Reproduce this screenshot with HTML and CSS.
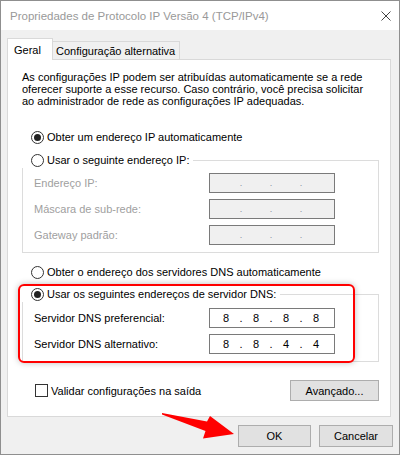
FILE: index.html
```html
<!DOCTYPE html>
<html lang="pt-BR">
<head>
    <meta charset="UTF-8">
    <title>Propriedades de Protocolo IP Versão 4 (TCP/IPv4)</title>
    <link rel="stylesheet" href="styles.css">
</head>
<body>
    <div class="window">
        <div class="titlebar">
            <span class="title">Propriedades de Protocolo IP Versão 4 (TCP/IPv4)</span>
            <svg class="close" viewBox="0 0 10 10" width="10" height="10">
                <path d="M0.5 0.5 L9.5 9.5 M9.5 0.5 L0.5 9.5" stroke="#444" stroke-width="1" fill="none"/>
            </svg>
        </div>

        <div class="tabs">
            <div class="tab active">Geral</div>
            <div class="tab">Configuração alternativa</div>
        </div>

        <div class="panel">
            <p class="intro">As configurações IP podem ser atribuídas automaticamente se a rede<br>oferecer suporte a esse recurso. Caso contrário, você precisa solicitar<br>ao administrador de rede as configurações IP adequadas.</p>

            <div class="option first"><span class="radio checked"></span>Obter um endereço IP automaticamente</div>

            <fieldset class="group disabled">
                <legend class="option"><span class="radio"></span>Usar o seguinte endereço IP:</legend>
                <div class="rows">
                    <div class="row">
                        <span class="label">Endereço IP:</span>
                        <span class="ip"><span class="seg"></span><span class="dot">.</span><span class="seg"></span><span class="dot">.</span><span class="seg"></span><span class="dot">.</span><span class="seg"></span></span>
                    </div>
                    <div class="row">
                        <span class="label">Máscara de sub-rede:</span>
                        <span class="ip"><span class="seg"></span><span class="dot">.</span><span class="seg"></span><span class="dot">.</span><span class="seg"></span><span class="dot">.</span><span class="seg"></span></span>
                    </div>
                    <div class="row">
                        <span class="label">Gateway padrão:</span>
                        <span class="ip"><span class="seg"></span><span class="dot">.</span><span class="seg"></span><span class="dot">.</span><span class="seg"></span><span class="dot">.</span><span class="seg"></span></span>
                    </div>
                </div>
            </fieldset>

            <div class="option dns-auto"><span class="radio"></span>Obter o endereço dos servidores DNS automaticamente</div>

            <fieldset class="group dns">
                <legend class="option"><span class="radio checked"></span>Usar os seguintes endereços de servidor DNS:</legend>
                <div class="rows">
                    <div class="row">
                        <span class="label">Servidor DNS preferencial:</span>
                        <span class="ip"><span class="seg">8</span><span class="dot">.</span><span class="seg">8</span><span class="dot">.</span><span class="seg">8</span><span class="dot">.</span><span class="seg">8</span></span>
                    </div>
                    <div class="row">
                        <span class="label">Servidor DNS alternativo:</span>
                        <span class="ip"><span class="seg">8</span><span class="dot">.</span><span class="seg">8</span><span class="dot">.</span><span class="seg">4</span><span class="dot">.</span><span class="seg">4</span></span>
                    </div>
                </div>
            </fieldset>

            <div class="check-row">
                <span class="check"><span class="box"></span>Validar configurações na saída</span>
                <span class="button advanced">Avançado...</span>
            </div>

            <!-- destaque vermelho sobre o grupo DNS -->
            <div class="highlight"></div>
        </div>

        <div class="footer">
            <span class="button ok">OK</span>
            <span class="button cancel">Cancelar</span>
        </div>

        <!-- seta vermelha apontando para OK -->
        <svg class="arrow" viewBox="150 400 100 45" width="100" height="45">
            <path d="M162 413 L207 421.5 L210 416 L234 434 L203 438.5 L205.5 431 L162 414.5 Z" fill="#f00"/>
        </svg>
    </div>
</body>
</html>
```

FILE: styles.css
```css
body {
    margin: 0;
    font-family: "Liberation Sans", Arial, sans-serif;
    font-size: 11px;
    color: #000;
}
.window {
    position: relative;
    width: 400px;
    height: 455px;
    box-sizing: border-box;
    border: 1px solid #8f8f8f;
    background: #f0f0f0;
}
.titlebar {
    height: 29px;
    background: #fff;
    display: flex;
    align-items: center;
    padding-left: 9px;
}
.title {
    flex: 1;
    color: #999;
    font-size: 11.5px;
}
.close {
    margin-right: 8px;
}
.tabs {
    display: flex;
    align-items: flex-end;
    margin: 8px 0 0 6px;
    height: 21px;
    position: relative;
    z-index: 1;
}
.tab {
    box-sizing: border-box;
    border: 1px solid #d9d9d9;
    border-bottom: none;
    border-left: none;
    width: 127px;
    height: 18px;
    padding-left: 3px;
    display: flex;
    align-items: center;
}
.tab.active {
    background: #fff;
    border-left: 1px solid #d9d9d9;
    width: 46px;
    height: 22px;
    margin-bottom: -1px;
    padding-left: 6px;
}
.panel {
    position: relative;
    margin: 0 8px 0 6px;
    height: 358px;
    box-sizing: border-box;
    border: 1px solid #d9d9d9;
    background: #fff;
    padding: 0 11px 0 14px;
}
.intro {
    margin: 12px 0 0;
    line-height: 11.8px;
}
.option {
    display: flex;
    align-items: center;
    height: 16px;
}
.option.first {
    margin-top: 22px;
}
.radio {
    width: 13px;
    height: 13px;
    box-sizing: border-box;
    border: 1px solid #333;
    border-radius: 50%;
    margin: 0 3px 0 9px;
    display: flex;
    align-items: center;
    justify-content: center;
}
.radio.checked::after {
    content: "";
    width: 7px;
    height: 7px;
    border-radius: 50%;
    background: #222;
}
.group {
    margin: 7px 0 0;
    padding: 5px 0 7px;
    border: 1px solid #dcdcdc;
    min-inline-size: 0;
}
.group legend {
    margin-left: -1px;
    padding: 0 4px 0 0;
}
.group.dns {
    margin-top: 6px;
    padding-top: 6px;
}
.rows {
    display: grid;
    gap: 6px;
}
.row {
    display: flex;
    align-items: center;
    height: 20px;
    padding-left: 11px;
}
.label {
    width: 175px;
}
.ip {
    width: 126px;
    height: 20px;
    box-sizing: border-box;
    border: 1px solid #7a7a7a;
    background: #fff;
    display: flex;
    align-items: center;
    padding-left: 4px;
}
.seg {
    width: 24px;
    text-align: center;
}
.dot {
    width: 6px;
    text-align: center;
}
.disabled .label {
    color: #a0a0a0;
}
.disabled .ip {
    background: #f0f0f0;
}
.disabled .dot {
    color: #8a8aa0;
    font-size: 9px;
}
.dns-auto {
    margin-top: 11px;
}
.check-row {
    display: flex;
    align-items: center;
    justify-content: space-between;
    margin-top: 18px;
    height: 21px;
}
.check {
    display: flex;
    align-items: center;
}
.box {
    width: 13px;
    height: 13px;
    box-sizing: border-box;
    border: 1px solid #333;
    margin: 0 3px 0 13px;
}
.button {
    box-sizing: border-box;
    display: flex;
    align-items: center;
    justify-content: center;
    background: #e1e1e1;
    border: 1px solid #adadad;
}
.advanced {
    width: 89px;
    height: 21px;
}
.footer {
    display: flex;
    justify-content: flex-end;
    gap: 8px;
    margin-top: 8px;
    padding-right: 6px;
}
.ok {
    width: 73px;
    height: 22px;
}
.cancel {
    width: 74px;
    height: 22px;
}
.highlight {
    position: absolute;
    left: 10px;
    top: 224px;
    width: 337px;
    height: 79px;
    box-sizing: border-box;
    border: 2px solid #f00;
    border-radius: 6px;
    box-shadow: 0 0 6px rgba(0, 0, 0, 0.25);
}
.arrow {
    position: absolute;
    left: 149px;
    top: 399px;
}
```
